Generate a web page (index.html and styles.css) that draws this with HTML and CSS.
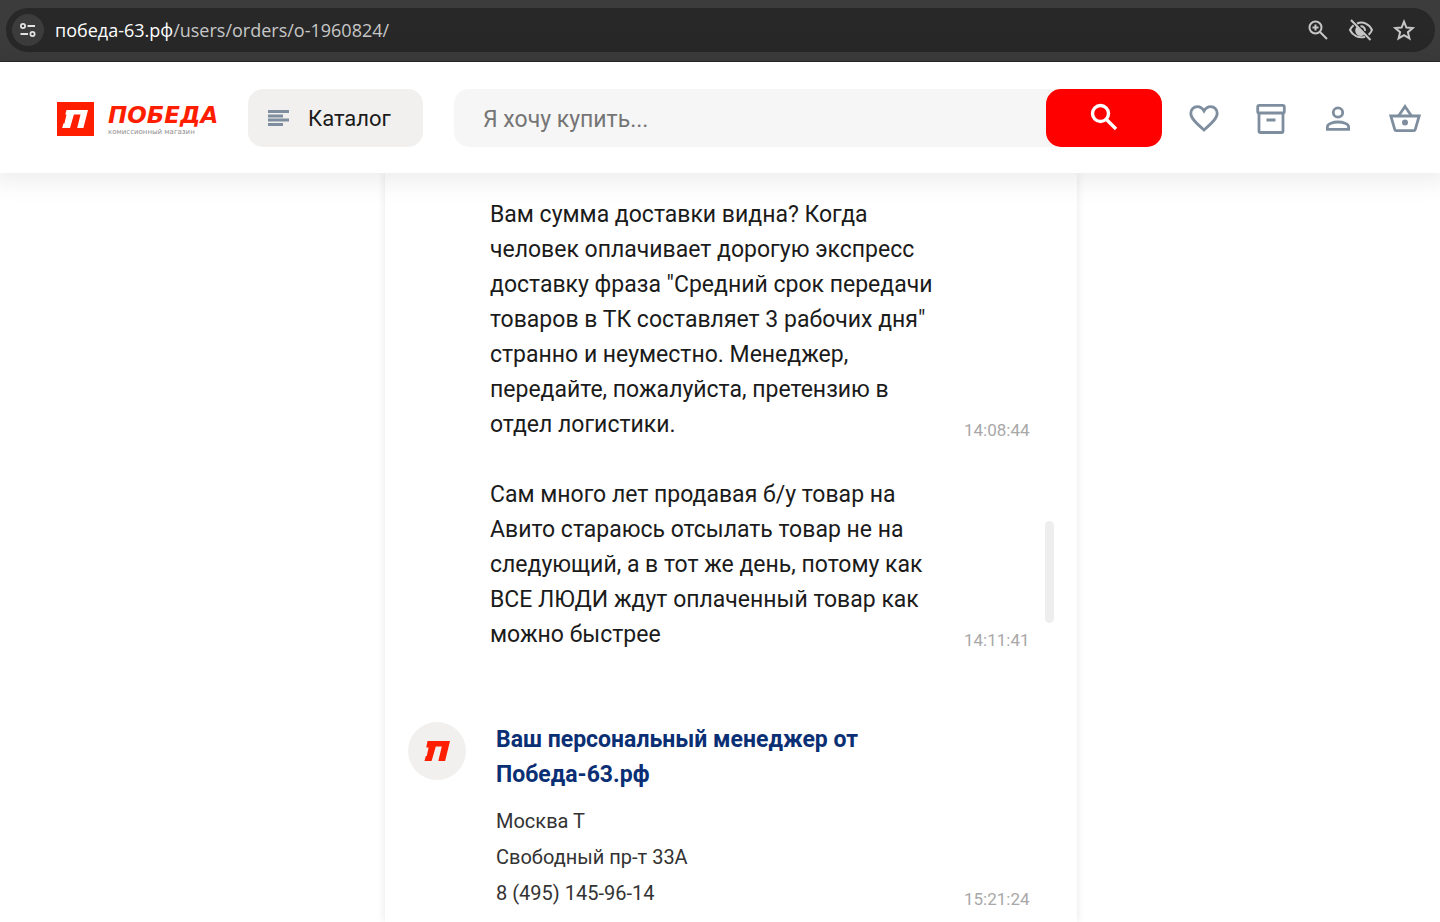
FILE: index.html
```html
<!DOCTYPE html>
<html lang="ru">
<head>
<meta charset="utf-8">
<meta name="viewport" content="width=device-width, initial-scale=1">
<title>Победа — заказ o-1960824</title>
<link rel="stylesheet" href="styles.css">
</head>
<body>
<div class="browser-bar">
  <div class="address">
    <button class="site-info" aria-label="Сведения о сайте">
      <svg width="18" height="18" viewBox="0 0 18 18" fill="none" stroke="#e3e3e3" stroke-width="1.8"><circle cx="4" cy="5" r="2.1"/><path d="M8.500 5H16M1.500 13H9"/><circle cx="13.500" cy="13" r="2.1"/></svg>
    </button>
    <div class="url"><span class="url-host">победа-63.рф</span>/users/orders/o-1960824/</div>
    <div class="address-actions">
      <button class="bar-button" aria-label="Масштаб">
        <svg width="24" height="24" viewBox="0 0 24 24" fill="none" stroke="#c7c7c7" stroke-width="2"><circle cx="9.500" cy="9.500" r="6"/><path d="M14 14l7 7M6.500 9.500h6M9.500 6.500v6"/></svg>
      </button>
      <button class="bar-button" aria-label="Сторонние файлы cookie заблокированы">
        <svg width="26" height="24" viewBox="0 0 26 24" fill="none" stroke="#c7c7c7" stroke-width="2"><path d="M9 5.500C15 3 21.500 6 24 12c-.8 2-2 3.500-3.400 4.700M17 18.700C10.500 20.500 4.500 17.500 2 12c.9-2 2-3.500 3.600-4.800"/><path d="M8.600 8.800a4.800 4.800 0 0 0 8.300 7.400z" fill="#c7c7c7" stroke="none"/><path d="M12.500 8.300a4 4 0 0 1 4.500 4.500"/><path d="M3 2l19.500 20"/></svg>
      </button>
      <button class="bar-button" aria-label="Добавить в закладки">
        <svg width="24" height="24" viewBox="0 0 24 24" fill="none" stroke="#c7c7c7" stroke-width="2"><path d="M12 3.700l2.400 5.900 6.300.5-4.800 4.100 1.500 6.200-5.400-3.300-5.400 3.300 1.500-6.200-4.800-4.100 6.300-.5z"/></svg>
      </button>
    </div>
  </div>
</div>

<header class="header">
  <a class="logo" href="#">
    <svg width="37" height="34" viewBox="0 0 37 34"><path fill="#ff1e00" d="M0 0h37v34H0z"/><path fill="#fff" d="M9.500 8H31l-4.600 18h-6.200l3.300-13.500h-6.600L13 26H5.200l1.200-4.500h1L9.500 12.500H8.300z"/></svg>
    <span class="logo-text"><span class="logo-name">ПОБЕДА</span><span class="logo-tagline">комиссионный магазин</span></span>
  </a>
  <button class="catalog">
    <svg width="22" height="16" viewBox="0 0 22 16" fill="#7f8e9e"><path d="M0 0h21v3H0zM0 4.500h15v3H0zM0 8.500h21v3H0zM0 13h15v3H0z"/></svg>
    Каталог
  </button>
  <form class="search">
    <input class="search-input" type="search" placeholder="Я хочу купить..." aria-label="Поиск">
    <button class="search-button" type="button" aria-label="Найти">
      <svg width="28" height="28" viewBox="0 0 28 28" fill="none" stroke="#fff" stroke-width="3.400"><circle cx="10.500" cy="10.500" r="8"/><path d="M16.500 16.500l9.500 9.500"/></svg>
    </button>
  </form>
  <nav class="nav">
    <a href="#" aria-label="Избранное"><svg width="32" height="32" viewBox="0 0 32 32" fill="none" stroke="#7f8e9e" stroke-width="2.800"><path d="M16 27C10 21.500 2.800 16 2.800 10.500 2.800 6.500 5.800 3.600 9.200 3.600c2.800 0 5.200 1.600 6.800 4.400 1.600-2.800 4-4.400 6.800-4.400 3.400 0 6.400 2.900 6.400 6.900C29.200 16 22 21.500 16 27z"/></svg></a>
    <a href="#" aria-label="Заказы"><svg width="32" height="32" viewBox="0 0 32 32" fill="none" stroke="#7f8e9e" stroke-width="2.800"><rect x="2.700" y="2.400" width="26.600" height="7.600" rx="1.500"/><path d="M4 10v18.500q0 1 1 1h22q1 0 1-1V10M11.500 17h9"/></svg></a>
    <a href="#" aria-label="Профиль"><svg width="32" height="32" viewBox="0 0 32 32" fill="none" stroke="#7f8e9e" stroke-width="2.800"><circle cx="16" cy="9.500" r="4.700"/><path d="M5.400 26.400v-2.600c0-3.200 6-4.800 10.600-4.800s10.600 1.600 10.600 4.800v2.600z"/></svg></a>
    <a href="#" aria-label="Корзина"><svg width="32" height="32" viewBox="0 0 32 32" fill="none" stroke="#7f8e9e" stroke-width="2.800"><path d="M1.800 13h28.400l-4 13.600q-.3 1-1.300 1H7.100q-1 0-1.300-1z"/><path d="M9.500 13L16 3.500 22.500 13"/><circle cx="16" cy="19.500" r="3" fill="#7f8e9e" stroke="none"/></svg></a>
  </nav>
</header>

<main class="page">
  <section class="chat">
    <article class="message">
      <p class="message-text">Вам сумма доставки видна? Когда человек оплачивает дорогую экспресс доставку фраза "Средний срок передачи товаров в ТК составляет 3 рабочих дня" странно и неуместно. Менеджер, передайте, пожалуйста, претензию в отдел логистики.</p>
      <time class="message-time">14:08:44</time>
    </article>
    <article class="message">
      <p class="message-text">Сам много лет продавая б/у товар на Авито стараюсь отсылать товар не на следующий, а в тот же день, потому как ВСЕ ЛЮДИ ждут оплаченный товар как можно быстрее</p>
      <time class="message-time">14:11:41</time>
    </article>
    <article class="message message-manager">
      <div class="avatar">
        <svg width="26" height="20" viewBox="0 0 26 20"><path fill="#ff1e00" d="M3.500 0H26l-4.900 20h-6.800l3.500-14.500h-6L7.600 20H.5l1.300-5h1L4.600 6.500H2.300z"/></svg>
      </div>
      <div class="manager-body">
        <h2 class="manager-name">Ваш персональный менеджер от Победа-63.рф</h2>
        <p class="manager-text">Москва Т<br>Свободный пр-т 33А<br>8 (495) 145-96-14</p>
      </div>
      <time class="message-time">15:21:24</time>
    </article>
    <div class="scroll-thumb"></div>
  </section>
</main>
</body>
</html>
```
FILE: styles.css
```css
* { box-sizing: border-box; }

body {
  margin: 0;
  height: 100vh;
  overflow: hidden;
  display: flex;
  flex-direction: column;
  background: #fff;
  color: #1b1b1b;
  font-family: Roboto, "Noto Sans", sans-serif;
}

button {
  border: 0;
  padding: 0;
  background: none;
  color: inherit;
  font: inherit;
  display: flex;
  align-items: center;
  justify-content: center;
}

.browser-bar {
  flex: none;
  padding: 8px 5px 9px 6px;
  background: #3c3c3c;
  border-bottom: 1px solid #2a2a2a;
}

.address {
  height: 44px;
  display: flex;
  align-items: center;
  padding: 0 19px 0 6px;
  border-radius: 22px;
  background: #282828;
}

.site-info {
  width: 32px;
  height: 32px;
  border-radius: 50%;
  background: #3c3c3c;
}

.url {
  flex: 1;
  margin-left: 11px;
  color: #c7c7c7;
  font: 18px/24px "Open Sans", "Noto Sans", sans-serif;
}

.url-host { color: #fff; }

.address-actions {
  display: flex;
  gap: 18px;
}

.header {
  flex: none;
  position: relative;
  z-index: 1;
  display: flex;
  align-items: center;
  padding: 27px 19px 26px 57px;
  background: #fff;
  box-shadow: 0 0 24px 8px rgba(0, 0, 0, 0.08);
}

.logo {
  width: 191px;
  padding-top: 2px;
  display: flex;
  align-items: center;
  gap: 14px;
  text-decoration: none;
}

.logo-text {
  display: flex;
  flex-direction: column;
  font-family: "DejaVu Sans", sans-serif;
  white-space: nowrap;
}

.logo-name {
  color: #ff1e00;
  font-size: 23px;
  font-weight: 700;
  font-style: italic;
  line-height: 25px;
}

.logo-tagline {
  color: #8c8c8c;
  font-size: 7px;
  line-height: 8px;
}

.catalog {
  width: 175px;
  height: 58px;
  margin-right: 31px;
  padding: 0 20px;
  justify-content: flex-start;
  gap: 18px;
  border-radius: 15px;
  background: #f1f0ee;
  font-size: 22px;
}

.search {
  flex: 1;
  display: flex;
  height: 58px;
  border-radius: 15px;
  background: #f6f6f6;
}

.search-input {
  flex: 1;
  min-width: 0;
  padding: 2px 29px 0;
  border: 0;
  outline: 0;
  background: none;
  font: 23px Roboto, sans-serif;
}

.search-input::placeholder { color: #757575; }

.search-button {
  width: 116px;
  padding-bottom: 2px;
  border-radius: 15px;
  background: #f00;
}

.nav {
  display: flex;
  gap: 35px;
  margin-left: 26px;
  padding-top: 2px;
}

.nav svg,
.logo svg,
.avatar svg { display: block; }

.page {
  flex: 1;
  min-height: 0;
  padding-left: 22px;
}

.chat {
  position: relative;
  max-width: 692px;
  min-height: 100%;
  margin: 0 auto;
  padding: 24px 47px 0 23px;
  display: flex;
  flex-direction: column;
  gap: 35px;
  box-shadow: 0 0 8px rgba(0, 0, 0, 0.1);
}

.message {
  display: flex;
  align-items: flex-end;
  justify-content: space-between;
  padding-left: 82px;
}

.message-text {
  margin: 0;
  width: 456px;
  font-size: 23px;
  line-height: 35px;
}

.message-time {
  width: 66px;
  color: #a8a8a8;
  font-size: 17px;
  line-height: 24px;
}

.message-manager {
  margin-top: 35px;
  padding-left: 0;
}

.avatar {
  width: 58px;
  height: 58px;
  display: flex;
  align-items: center;
  justify-content: center;
  align-self: flex-start;
  border-radius: 50%;
  background: #f1f0ee;
}

.manager-body {
  flex: 1;
  margin: 0 68px 0 30px;
}

.manager-name {
  margin: 0 0 11px;
  color: #0b2f74;
  font-size: 23px;
  font-weight: 700;
  line-height: 35px;
}

.manager-text {
  margin: 0;
  color: #333;
  font-size: 20px;
  line-height: 36px;
}

.scroll-thumb {
  position: absolute;
  top: 348px;
  right: 23px;
  width: 9px;
  height: 102px;
  border-radius: 5px;
  background: #eee;
}
```
